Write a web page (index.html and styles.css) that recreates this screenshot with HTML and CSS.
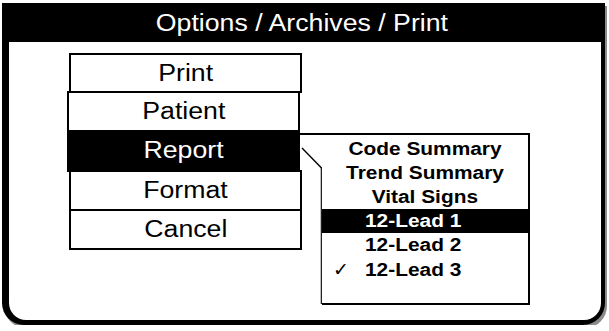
FILE: index.html
```html
<!DOCTYPE html>
<html lang="en">
<head>
  <meta charset="UTF-8" />
  <title>Options / Archives / Print</title>
  <link rel="stylesheet" href="styles.css">
</head>
<body>
  <div class="screen">
    <div class="title"><span class="wide">Options / Archives / Print</span></div>
    <div class="panel">
      <ul class="menu">
        <li class="item"><span class="wide">Print</span></li>
        <li class="item shifted"><span class="wide">Patient</span></li>
        <li class="item shifted active">
          <span class="wide">Report</span>

          <!-- report sub menu -->
          <svg class="connector" width="24" height="172" viewBox="0 0 24 172">
            <line x1="0" y1="2" x2="24" y2="2" stroke="#000" stroke-width="2"/>
            <line x1="2" y1="16" x2="21.5" y2="36" stroke="#000" stroke-width="1.4"/>
            <line x1="21.5" y1="35" x2="21.5" y2="172" stroke="#222" stroke-width="1.6"/>
          </svg>
          <div class="submenu">
            <div class="sub-item center"><span class="wide">Code Summary</span></div>
            <div class="sub-item center"><span class="wide">Trend Summary</span></div>
            <div class="sub-item center"><span class="wide">Vital Signs</span></div>
            <div class="sub-item lead selected"><span class="wide">12-Lead 1</span></div>
            <div class="sub-item lead"><span class="wide">12-Lead 2</span></div>
            <div class="sub-item lead checked"><span class="check">&#10003;</span><span class="wide">12-Lead 3</span></div>
          </div>
        </li>
        <li class="item"><span class="wide">Format</span></li>
        <li class="item"><span class="wide">Cancel</span></li>
      </ul>
    </div>
  </div>
</body>
</html>
```

FILE: styles.css
```css
* {
  margin: 0; padding: 0;
  box-sizing: border-box;
}
body {
  background-color: white;
  font-family: 'Liberation Sans', Arial, sans-serif;
  color: black;
}
.screen {
  margin: 3px 0 0 2px;
  width: 603px;
  height: 322px;
  background-color: black;
  padding: 0 4px 5px 7px;
  border-radius: 0 0 22px 22px;
  box-shadow: 2px 3px 0 #8c8c8c;
  display: flex;
  flex-direction: column;
}
.wide {
  display: inline-block;
  transform: scaleX(1.16);
  white-space: nowrap;
}
.title {
  height: 39px;
  color: white;
  font-size: 23px;
  line-height: 41px;
  text-align: center;
  padding-right: 6px;
}
.panel {
  flex: 1;
  background-color: white;
  border-radius: 0 0 17px 17px;
  padding: 11px 0 0 60px;
}
.menu {
  list-style: none;
  width: 233px;
}
.item {
  position: relative;
  height: 41px;
  border: 2px solid black;
  margin-top: -2px;
  font-size: 23px;
  line-height: 36px;
  text-align: center;
}
.item:first-child {
  margin-top: 0;
  height: 40px;
}
.shifted {
  margin-left: -2px;
  margin-right: 2px;
}
.active {
  background-color: black;
  color: white;
  height: 42px;
}
.connector {
  position: absolute;
  left: 231px;
  top: 0;
}
.submenu {
  position: absolute;
  left: 253px;
  top: 1px;
  width: 208px;
  height: 172px;
  background-color: white;
  color: black;
  border: 2px solid black;
  border-left: none;
  padding-top: 2px;
  font-size: 18px;
  font-weight: bold;
  line-height: 24px;
  text-align: center;
}
.sub-item {
  height: 24px;
}
.lead {
  text-align: left;
  padding-left: 43px;
}
.lead .wide {
  transform-origin: left center;
}
.selected {
  background-color: black;
  color: white;
}
.checked {
  padding-left: 11px;
}
.check {
  display: inline-block;
  width: 32px;
  font-family: 'DejaVu Sans', sans-serif;
  font-weight: normal;
  font-size: 19px;
}
```
